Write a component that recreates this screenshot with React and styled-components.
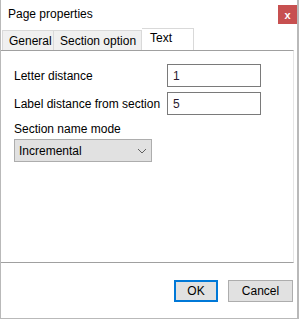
import styled, { createGlobalStyle } from "styled-components";

const GlobalStyle = createGlobalStyle`
    html, body {
        margin: 0;
        padding: 0;
        background: #ffffff;
    }
    body {
        font-family: "Liberation Sans", Arial, sans-serif;
        font-size: 12px;
        color: #000000;
    }
`;

const Window = styled.div`
    width: 299px;
    height: 319px;
    box-sizing: border-box;
    border: 1px solid #b9b9b9;
    border-top: none;
    border-right-width: 2px;
    background: #ffffff;
    display: flex;
    flex-direction: column;
`;

const TitleBar = styled.div`
    height: 28px;
    display: flex;
    align-items: center;
    justify-content: space-between;
    padding-left: 7px;
    padding-right: 0;
`;

const Title = styled.span`
    font-size: 12px;
    margin-top: -1px;
`;

const CloseButton = styled.div`
    width: 19px;
    height: 19px;
    background: #c75050;
    color: #ffffff;
    font-weight: bold;
    font-size: 11px;
    display: flex;
    align-items: center;
    justify-content: center;
    margin-top: 1px;
`;

const TabStrip = styled.div`
    height: 22px;
    display: flex;
    align-items: flex-end;
    padding-left: 1px;
`;

const Tab = styled.div`
    box-sizing: border-box;
    width: ${(p) => p.width}px;
    height: ${(p) => (p.active ? 22 : 20)}px;
    padding-left: ${(p) => (p.active ? 8 : 6)}px;
    padding-top: ${(p) => (p.active ? 2 : 3)}px;
    border: 1px solid #d9d9d9;
    border-bottom: none;
    border-left: ${(p) => (p.first ? "1px solid #d9d9d9" : "none")};
    background: ${(p) => (p.active ? "#ffffff" : "#f0f0f0")};
    white-space: nowrap;
`;

const Panel = styled.div`
    height: 213px;
    margin-right: 3px;
    border-top: 1px solid #a0a0a0;
    border-bottom: 1px solid #a0a0a0;
    border-right: 1px solid #e6e6e6;
    padding: 13px 0 0 13px;
    box-sizing: border-box;
`;

const FormGrid = styled.div`
    display: grid;
    grid-template-columns: 153px 94px;
    row-gap: 5px;
    align-items: center;
`;

const Label = styled.span`
    white-space: nowrap;
`;

const TextInput = styled.div`
    box-sizing: border-box;
    height: 23px;
    border: 1px solid #7a7a7a;
    padding: 0 5px;
    display: flex;
    align-items: center;
    color: #2a1a2e;
`;

const ModeLabel = styled.div`
    margin-top: 5px;
    height: 18px;
    display: flex;
    align-items: center;
`;

const Dropdown = styled.div`
    box-sizing: border-box;
    margin-top: 1px;
    width: 138px;
    height: 23px;
    border: 1px solid #adadad;
    background: #e1e1e1;
    display: flex;
    align-items: center;
    justify-content: space-between;
    padding: 0 4px 0 4px;
`;

const Footer = styled.div`
    flex: 1;
    display: flex;
    justify-content: flex-end;
    align-items: flex-start;
    padding-top: 17px;
    padding-right: 4px;
    gap: 10px;
`;

const Button = styled.div`
    box-sizing: border-box;
    width: ${(p) => p.width}px;
    height: 22px;
    background: #e1e1e1;
    border: ${(p) => (p.primary ? "2px solid #0078d7" : "1px solid #adadad")};
    display: flex;
    align-items: center;
    justify-content: center;
`;

const Chevron = () => (
    <svg width="10" height="6" viewBox="0 0 10 6">
        <path d="M1 1 L5 5 L9 1" fill="none" stroke="#606060" strokeWidth="1" />
    </svg>
);

const App = () => (
    <>
        <GlobalStyle />
        <Window>
            <TitleBar>
                <Title>Page properties</Title>
                <CloseButton>x</CloseButton>
            </TitleBar>
            <TabStrip>
                <Tab first width={52}>General</Tab>
                <Tab width={88}>Section option</Tab>
                <Tab active width={52}>Text</Tab>
            </TabStrip>
            <Panel>
                <FormGrid>
                    <Label>Letter distance</Label>
                    <TextInput>1</TextInput>
                    <Label>Label distance from section</Label>
                    <TextInput>5</TextInput>
                </FormGrid>
                <ModeLabel>Section name mode</ModeLabel>
                <Dropdown>
                    <span>Incremental</span>
                    <Chevron />
                </Dropdown>
            </Panel>
            <Footer>
                <Button primary width={44}>OK</Button>
                <Button width={65}>Cancel</Button>
            </Footer>
        </Window>
    </>
);

export default App;
